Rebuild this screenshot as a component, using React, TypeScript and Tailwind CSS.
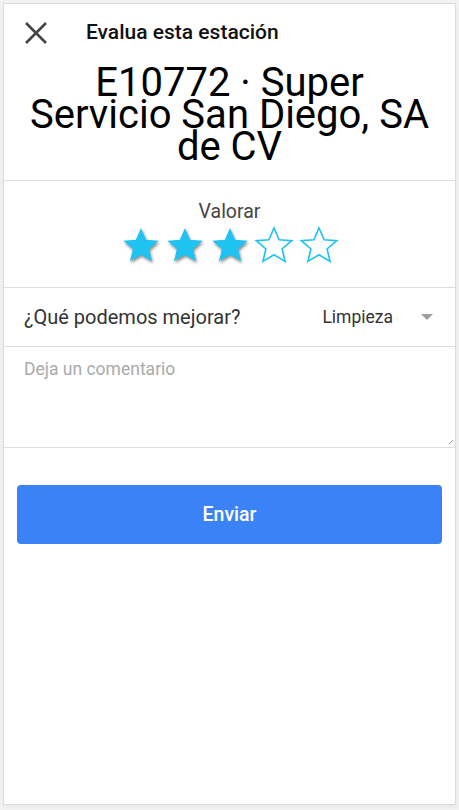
import React from "react";

const Star = ({ filled }: { filled: boolean }) => (
  <svg width="40" height="38" viewBox="0 0 24 23" className={filled ? "drop-shadow-[1px_2px_1.5px_rgba(0,0,0,0.45)]" : ""}>
    <path
      d="M12 1.2l3.1 7.1 7.6.6-5.8 5 1.8 7.5L12 17.4l-6.7 4 1.8-7.5-5.8-5 7.6-.6z"
      fill={filled ? "#1ec3f2" : "none"}
      stroke="#1ec3f2"
      strokeWidth={filled ? 0 : 1}
      strokeLinejoin="miter"
    />
  </svg>
);

export default function App() {
  return (
    <div className="min-h-[810px] w-[459px] bg-[#f2f2f2] p-[3px] pb-[5px]" style={{ fontFamily: "Roboto, 'Liberation Sans', sans-serif" }}>
      <div className="flex h-[802px] flex-col border border-[#dcdcdc] bg-white shadow-[0_2px_4px_rgba(0,0,0,0.05)]">
        <div className="flex h-[56px] items-center pl-[20px] pt-[1px]">
          <svg width="24" height="24" viewBox="0 0 24 24" className="shrink-0">
            <path d="M2 2L22 22M22 2L2 22" stroke="#444" strokeWidth="2.6" />
          </svg>
          <span className="ml-[38px] text-[21px] font-medium text-[#111]">Evalua esta estación</span>
        </div>
        <div className="border-b border-[#dddddd] px-[24px] pb-[17px] pt-[7px] text-center text-[40px] leading-[32px] text-black">
          E10772 · Super Servicio San Diego, SA de CV
        </div>
        <div className="flex h-[107px] flex-col items-center border-b border-[#dddddd] pt-[20px]">
          <span className="text-[19.5px] leading-[22px] text-[#444]">Valorar</span>
          <div className="mt-[3px] flex gap-[4.5px]">
            <Star filled />
            <Star filled />
            <Star filled />
            <Star filled={false} />
            <Star filled={false} />
          </div>
        </div>
        <div className="flex h-[59px] items-center border-b border-[#dddddd] pl-[20px] pr-[20px]">
          <span className="flex-1 text-[20px] text-[#333]">¿Qué podemos mejorar?</span>
          <span className="text-[17.5px] text-[#333]">Limpieza</span>
          <svg width="12" height="6" viewBox="0 0 12 6" className="ml-[28px] mr-[2px]">
            <path d="M0 0h12L6 6z" fill="#9e9e9e" />
          </svg>
        </div>
        <div className="relative h-[101px] border-b border-[#dddddd] px-[20px] pt-[9px]">
          <span className="text-[17.5px] text-[#aaaaaa]">Deja un comentario</span>
          <svg width="4" height="4" viewBox="0 0 4 4" className="absolute bottom-[3px] right-[2px]">
            <path d="M0 4L4 0" stroke="#888" strokeWidth="0.8" />
          </svg>
        </div>
        <div className="px-[13px] pt-[37px]">
          <button className="flex h-[59px] w-full items-center justify-center rounded-[4px] bg-[#3b82f6] text-[19.5px] font-medium text-white">
            Enviar
          </button>
        </div>
      </div>
    </div>
  );
}
